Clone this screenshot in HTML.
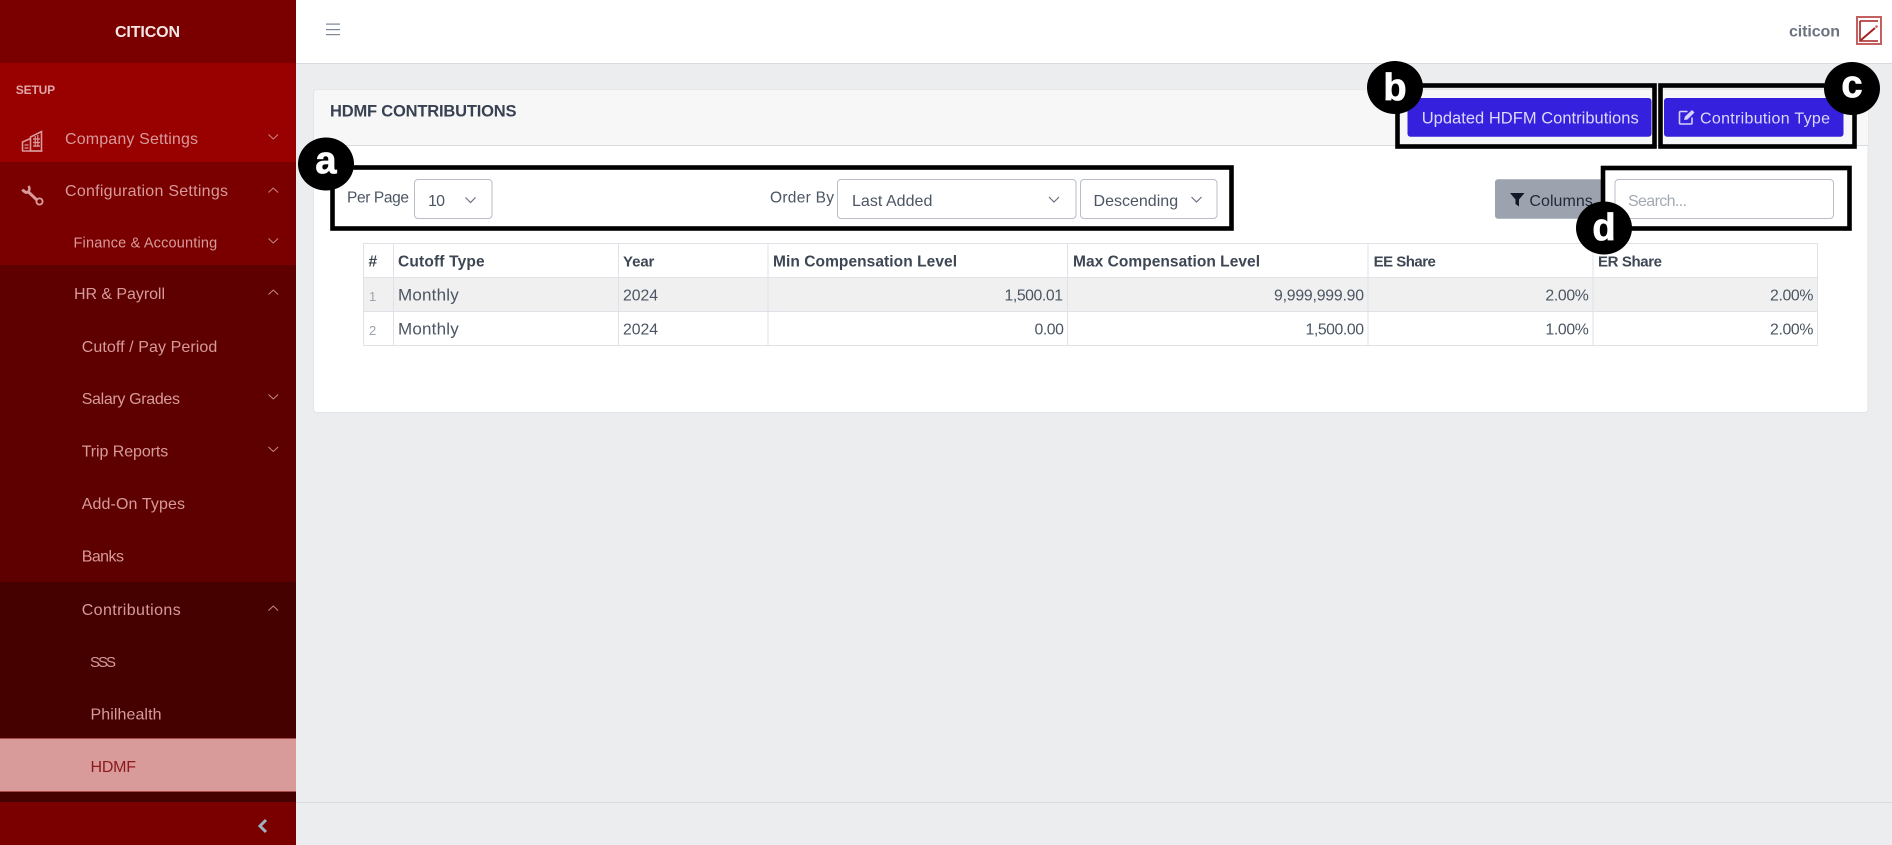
<!DOCTYPE html>
<html><head><meta charset="utf-8"><title>HDMF Contributions</title>
<style>
html,body{margin:0;padding:0;width:1892px;height:845px;overflow:hidden;background:#ebedef}
svg{display:block}
text{font-family:"Liberation Sans",sans-serif;font-size:16px}
.m text{fill:#d79a9a}
.t text{fill:#4b5563;font-size:15.8px}
.t .w{font-size:17px}
.h text{fill:#3d4653;font-size:15.5px;font-weight:700}
.c text{fill:#fff;stroke:#fff;stroke-width:.8;font-size:38px;font-weight:700;text-anchor:middle}
.chev{fill:none;stroke:#c88a8a;stroke-width:1}
.sel{fill:#fff;stroke:#b8bdc7;stroke-width:1}
.sc{fill:none;stroke:#6b7280;stroke-width:1.2}
.box{fill:none;stroke:#000;stroke-width:4.6}
.tb{fill:none;stroke:#dfe2e7;stroke-width:1}
</style></head><body>
<svg width="1892" height="845" viewBox="0 0 1892 845" xmlns="http://www.w3.org/2000/svg">
<!-- header / footer -->
<rect x="296" y="0" width="1596" height="63" fill="#fff"/>
<rect x="296" y="63" width="1596" height="1" fill="#d8dbe0"/>
<rect x="296" y="802" width="1596" height="1" fill="#d8dbe0"/>
<g fill="#7b8794"><rect x="326" y="23.5" width="14" height="1.2"/><rect x="326" y="29" width="14" height="1.2"/><rect x="326" y="34" width="14" height="1.2"/></g>
<text x="1789" y="36.500" textLength="51" font-weight="700" fill="#6b7280" style="font-size:16px">citicon</text>
<g fill="none"><rect x="1857" y="17" width="24" height="27" stroke-width="2" stroke="#c46060"/><path d="M1860 21h18M1860 21v20h18" stroke-width="1.600" stroke="#a82020"/><path d="M1861 40L1875 28" stroke-width="2" stroke="#a82020"/><circle cx="1876.500" cy="26.500" r="1.300" fill="#c46060"/></g>

<!-- sidebar -->
<rect x="0" y="0" width="296" height="63" fill="#7a0000"/>
<rect x="0" y="63" width="296" height="99" fill="#990000"/>
<rect x="0" y="162" width="296" height="103" fill="#7a0000"/>
<rect x="0" y="265" width="296" height="317" fill="#5e0000"/>
<rect x="0" y="582" width="296" height="220" fill="#450000"/>
<rect x="0" y="738" width="296" height="53.500" fill="#d99a9a"/>
<rect x="0" y="738" width="296" height="1" fill="#a84a4a"/>
<rect x="0" y="791" width="296" height="1" fill="#a84a4a"/>
<rect x="0" y="802" width="296" height="43" fill="#7a0000"/>
<text x="115" y="37" textLength="65" font-weight="700" fill="#f5e6e6" style="font-size:16px">CITICON</text>
<text x="15.700" y="94" textLength="39.500" font-weight="700" fill="#e0a8a8" style="font-size:12px">SETUP</text>
<g class="m">
<text x="65" y="144" textLength="133">Company Settings</text>
<text x="65" y="196" textLength="163">Configuration Settings</text>
<text x="73.500" y="247.500" textLength="143.700" style="font-size:14.500px">Finance &amp; Accounting</text>
<text x="74" y="299" textLength="91">HR &amp; Payroll</text>
<text x="81.700" y="352" textLength="135.600">Cutoff / Pay Period</text>
<text x="81.700" y="404" textLength="98.300">Salary Grades</text>
<text x="81.700" y="456.500" textLength="86.600">Trip Reports</text>
<text x="81.700" y="509" textLength="103.300">Add-On Types</text>
<text x="81.700" y="561.500" textLength="42.300">Banks</text>
<text x="81.700" y="615" textLength="99">Contributions</text>
<text x="90" y="667" textLength="26" style="font-size:15px">SSS</text>
<text x="90.500" y="719.500" textLength="71">Philhealth</text>
</g>
<text x="90.500" y="772" textLength="45.500" fill="#8b1a1a">HDMF</text>
<g class="chev">
<path d="M268.500 134.500l4.800 4.500 4.800-4.500"/>
<path d="M268.500 192.500l4.800-4.500 4.800 4.500"/>
<path d="M268.500 238.500l4.800 4.500 4.800-4.500"/>
<path d="M268.500 294.500l4.800-4.500 4.800 4.500"/>
<path d="M268.500 394.500l4.800 4.500 4.800-4.500"/>
<path d="M268.500 447l4.800 4.500 4.800-4.500"/>
<path d="M268.500 610.500l4.800-4.500 4.800 4.500"/>
</g>
<path d="M266 820l-6 6 6 6" fill="none" stroke="#9fb0c0" stroke-width="3"/>
<!-- building icon -->
<g fill="none" stroke="#d99a9a" stroke-width="1.600">
<path d="M22.500 151V142l8-3.500M30.500 151V137l11-5.500V151z"/><path d="M22 151h20.500"/>
<path d="M24.500 145h4M24.500 148h4M33 139h7M33 142.500h7M33 146h7M35.200 136v11M37.800 135v12" stroke-width="1.200"/>
</g>
<!-- wrench icon -->
<g fill="none" stroke="#d99a9a">
<path d="M22.500 189.500c1.500 2.500 4 3.500 6 2.500l9 8.500" stroke-width="3"/>
<path d="M28.500 186c1 1.500 1.200 3.500 .2 5" stroke-width="2.500"/>
<circle cx="39.500" cy="201.500" r="3.100" stroke-width="1.800"/>
</g>

<!-- card -->
<rect x="313.500" y="90" width="1554.500" height="322.500" rx="3" fill="#fff" stroke="#e1e4e8"/>
<path d="M314 145V93a3 3 0 0 1 3-3H1865a3 3 0 0 1 3 3V145z" fill="#f7f7f7"/>
<rect x="314" y="145" width="1554" height="1" fill="#d8dbe0"/>
<text x="330" y="116.500" textLength="186.500" font-weight="700" fill="#374151" style="font-size:16.500px">HDMF CONTRIBUTIONS</text>

<!-- buttons -->
<rect x="1407.500" y="98" width="244" height="38.700" rx="3" fill="#3520dd"/>
<text x="1421.700" y="123.300" textLength="217" fill="#dcd9fa" style="font-size:16.500px">Updated HDFM Contributions</text>
<rect x="1664" y="98" width="179.500" height="38.700" rx="3" fill="#3520dd"/>
<g fill="none" stroke="#d5d1f8" stroke-width="1.600"><path d="M1692 117.500v5.500a1 1 0 0 1-1 1h-10.500a1 1 0 0 1-1-1v-10.500a1 1 0 0 1 1-1h7"/></g>
<path d="M1684 120l1-3.500 7-6.500 2.500 2.500-7 7z" fill="#d5d1f8"/>
<text x="1700" y="123.300" textLength="130" fill="#dcd9fa">Contribution Type</text>

<!-- toolbar -->
<text x="347" y="202.500" textLength="62" fill="#4b5563" style="font-size:15.500px">Per Page</text>
<rect class="sel" x="414.500" y="179.500" width="77.500" height="39" rx="3.500"/>
<text x="428" y="206" textLength="17" fill="#4b5563">10</text>
<path class="sc" d="M465.500 197.500l5 5 5-5"/>
<text x="770" y="202.500" textLength="64" fill="#4b5563" style="font-size:15.500px">Order By</text>
<rect class="sel" x="837.500" y="179.500" width="238.500" height="39" rx="3.500"/>
<text x="852" y="206" textLength="80.400" fill="#4b5563">Last Added</text>
<path class="sc" d="M1049 197l5 5 5-5"/>
<rect class="sel" x="1080.500" y="179.500" width="136.500" height="39" rx="3.500"/>
<text x="1093.500" y="206" textLength="84.600" fill="#4b5563">Descending</text>
<path class="sc" d="M1191.500 197l5 5 5-5"/>

<rect x="1495" y="179.300" width="108" height="39.400" rx="3" fill="#9ca3af"/>
<path d="M1510 193h14.500l-5.500 6.500v7l-3.500-2.500v-4.500z" fill="#111827"/>
<text x="1529.400" y="206" textLength="63.400" fill="#1f2937">Columns</text>
<rect class="sel" x="1615" y="179.500" width="218.500" height="39" rx="3.500"/>
<text x="1628" y="206" textLength="59" fill="#a3a9b3">Search...</text>

<!-- table -->
<rect x="363" y="277.500" width="1454.500" height="34" fill="#f0f0f0"/>
<rect class="tb" x="363.500" y="243.500" width="1454" height="102"/>
<path class="tb" d="M363 277.500h1455M363 311.500h1455M393.500 243v102M618.500 243v102M768 243v102M1067.500 243v102M1368 243v102M1593 243v102"/>
<g class="h">
<text x="368.500" y="266.500">#</text>
<text x="398" y="266.500" textLength="86.600">Cutoff Type</text>
<text x="623" y="266.500" textLength="31.400" style="font-size:15px">Year</text>
<text x="773" y="266.500" textLength="184">Min Compensation Level</text>
<text x="1073" y="266.500" textLength="187">Max Compensation Level</text>
<text x="1373.600" y="266.500" textLength="62.300" style="font-size:15px">EE Share</text>
<text x="1598" y="266.500" textLength="64" style="font-size:15px">ER Share</text>
</g>
<text x="369" y="301" fill="#9ca3af" style="font-size:13px">1</text>
<text x="369" y="335" fill="#9ca3af" style="font-size:13px">2</text>
<g class="t">
<text class="w" x="398" y="300.500" textLength="60.700">Monthly</text>
<text x="623" y="300.500" textLength="35">2024</text>
<text x="1004.500" y="300.500" textLength="58.500">1,500.01</text>
<text x="1274" y="300.500" textLength="90">9,999,999.90</text>
<text x="1545.400" y="300.500" textLength="43.400">2.00%</text>
<text x="1770" y="300.500" textLength="43.400">2.00%</text>
<text class="w" x="398" y="334.500" textLength="60.700">Monthly</text>
<text x="623" y="334.500" textLength="35">2024</text>
<text x="1034.500" y="334.500" textLength="29.400">0.00</text>
<text x="1305.500" y="334.500" textLength="58.500">1,500.00</text>
<text x="1545.400" y="334.500" textLength="43.400">1.00%</text>
<text x="1770" y="334.500" textLength="43.400">2.00%</text>
</g>

<!-- annotation boxes -->
<rect class="box" x="332.500" y="167.500" width="899" height="61"/>
<rect class="box" x="1397.500" y="85.500" width="257" height="61"/>
<rect class="box" x="1660.500" y="85.500" width="194" height="61"/>
<rect class="box" x="1603" y="168" width="246.500" height="60.500"/>
<g fill="#000">
<ellipse cx="326" cy="164" rx="28" ry="26.500"/>
<ellipse cx="1395" cy="87.500" rx="28" ry="26.500"/>
<ellipse cx="1852" cy="88.500" rx="28" ry="26.500"/>
<ellipse cx="1604" cy="228" rx="28" ry="26.500"/>
</g>
<g class="c">
<text x="326" y="173">a</text>
<text x="1395" y="100">b</text>
<text x="1852" y="97">c</text>
<text x="1604" y="240">d</text>
</g>
</svg>
</body></html>
